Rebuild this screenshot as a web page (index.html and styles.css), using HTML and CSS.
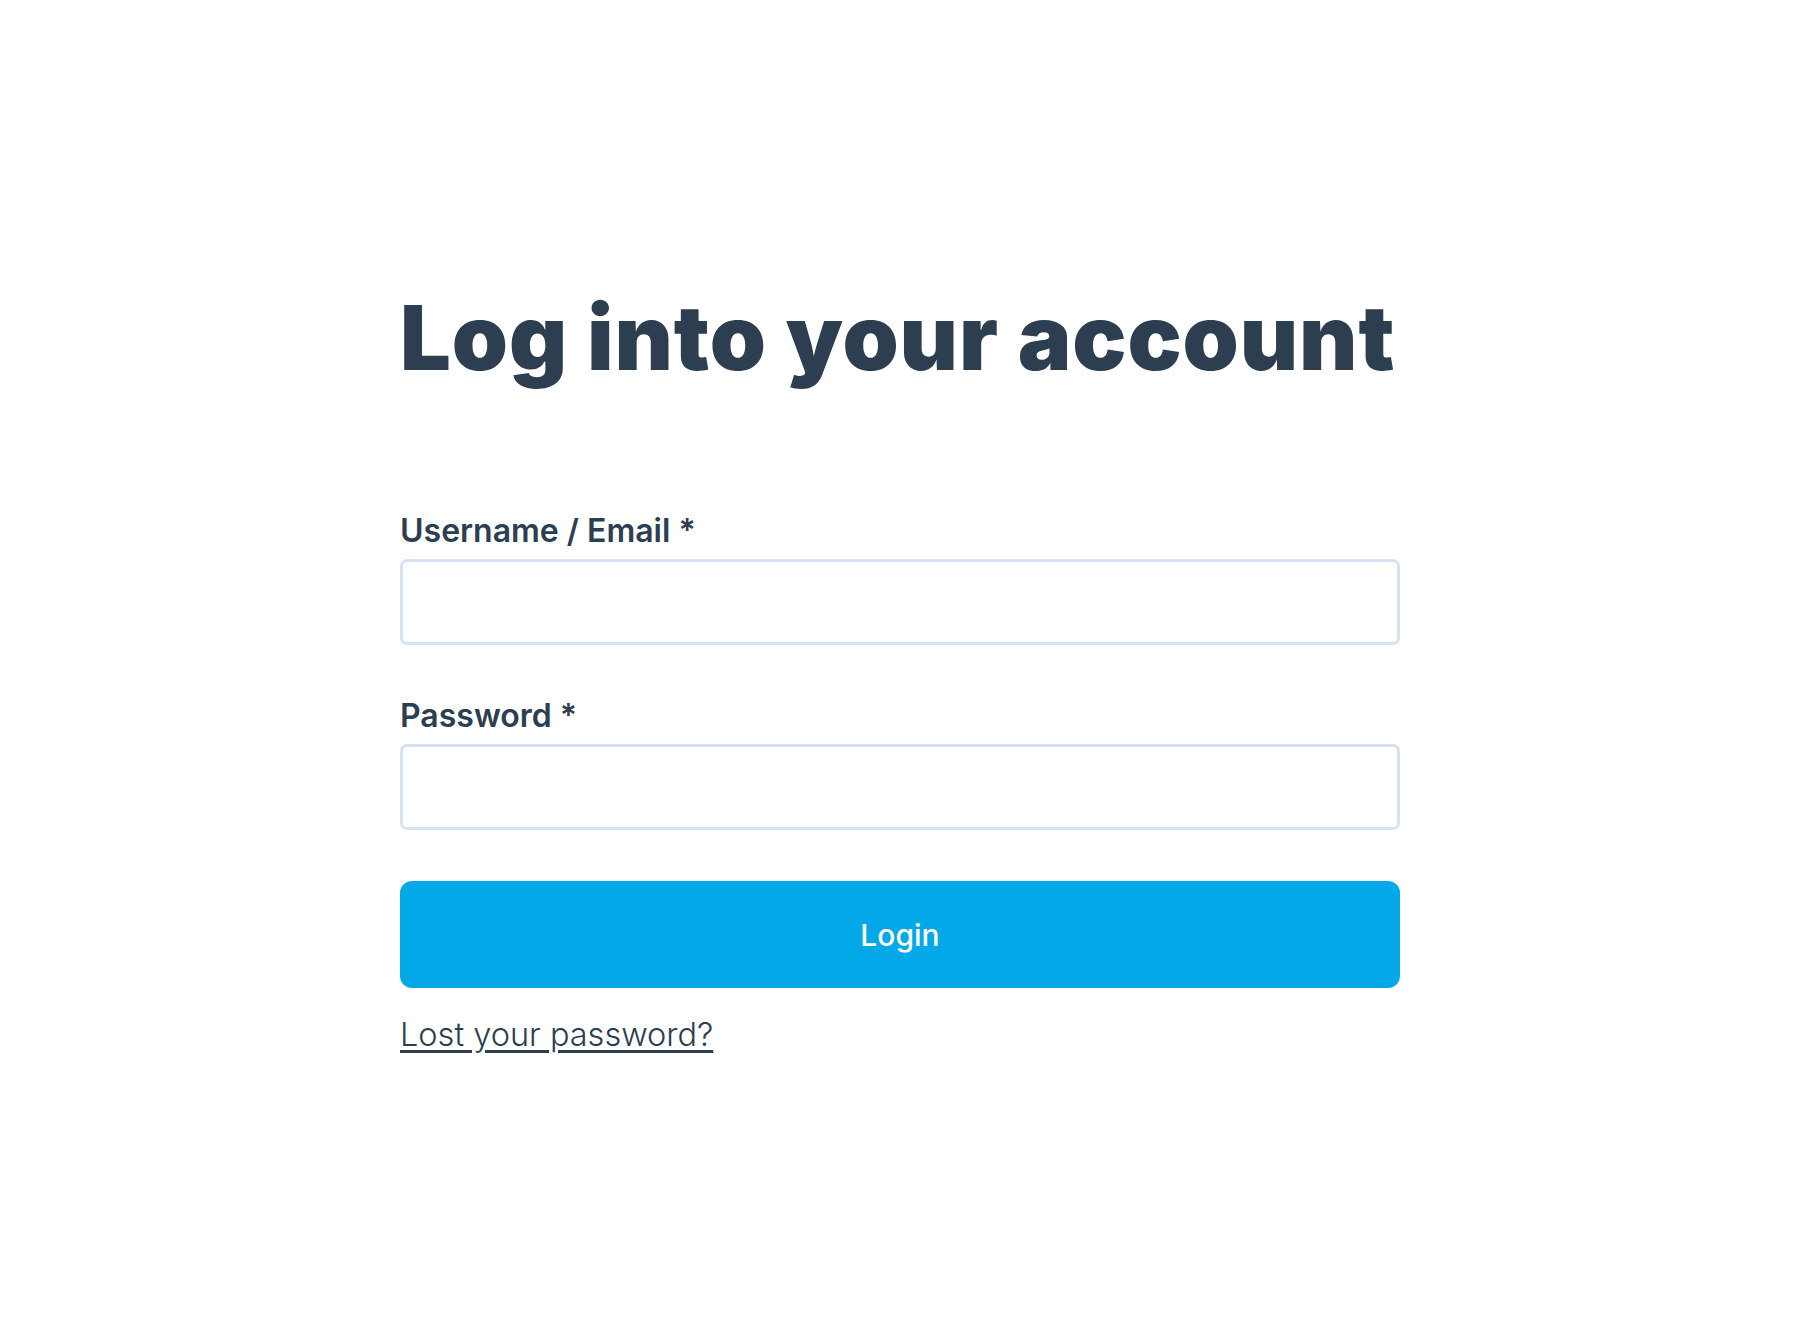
FILE: index.html
```html
<!DOCTYPE html>
<html lang="en">
<head>
  <meta charset="UTF-8" />
  <meta name="viewport" content="width=device-width, initial-scale=1.0"/>
  <title>Log into your account</title>
  <link rel="stylesheet" href="styles.css">
</head>
<body>

  <main class="login-page">
    <h1>Log into your account</h1>

    <form class="login-form" onsubmit="return false;">
      <div class="field">
        <label for="username">Username / Email *</label>
        <input type="text" id="username" name="username" />
      </div>

      <div class="field">
        <label for="password">Password *</label>
        <input type="password" id="password" name="password" />
      </div>

      <button type="submit">Login</button>

      <a class="lost-link" href="#">Lost your password?</a>
    </form>
  </main>

</body>
</html>
```

FILE: styles.css
```css
/* Reset */
* {
  margin: 0;
  padding: 0;
  box-sizing: border-box;
}

body {
  background: #fff;
  color: #2c3e50;
  font-family: Inter, 'Noto Sans', Arial, sans-serif;
}

/* Centered column */
.login-page {
  width: 1000px;
  margin: 0 auto;
  padding-top: 284px;
}

h1 {
  font-size: 90px;
  font-weight: 900;
  letter-spacing: 0.01em;
  line-height: 1.2;
  white-space: nowrap;
  color: #2c3e50;
  margin-bottom: 119px;
}

.login-form {
  display: flex;
  flex-direction: column;
}

.field {
  display: flex;
  flex-direction: column;
  gap: 9px;
  margin-bottom: 51px;
}

label {
  font-size: 32px;
  font-weight: 600;
  color: #2c3e50;
}

input[type="text"],
input[type="password"] {
  width: 100%;
  height: 86px;
  border: 3px solid #d6e2f3;
  border-radius: 7px;
  padding: 0 20px;
  font-size: 28px;
  font-family: inherit;
  color: #2c3e50;
  background: #fff;
}
input:focus {
  outline: none;
  border-color: #02a8e8;
}

button {
  height: 107px;
  border: none;
  border-radius: 12px;
  background-color: #02a8e8;
  color: #fff;
  font-family: inherit;
  font-size: 30px;
  font-weight: 500;
  cursor: pointer;
}
button:hover {
  background-color: #0296cf;
}

.lost-link {
  align-self: flex-start;
  margin-top: 27px;
  font-size: 32.5px;
  font-weight: 300;
  color: #2c3e50;
  text-decoration: underline;
  text-underline-offset: 4px;
}
```
